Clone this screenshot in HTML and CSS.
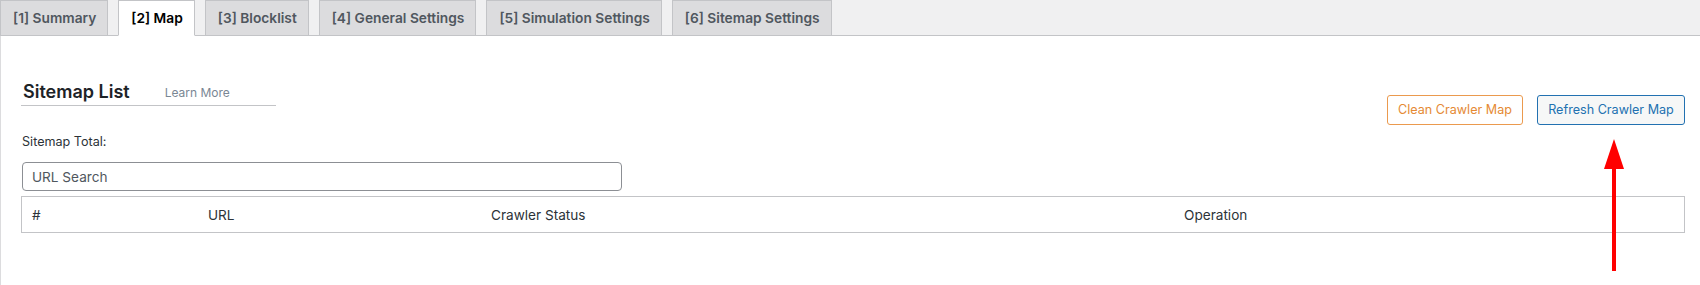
FILE: index.html
```html
<!DOCTYPE html>
<html lang="en">
<head>
<meta charset="utf-8">
<title>Sitemap List</title>
<link rel="stylesheet" href="styles.css">
</head>
<body>
<nav class="tabs">
  <a class="tab">[1] Summary</a>
  <a class="tab active">[2] Map</a>
  <a class="tab">[3] Blocklist</a>
  <a class="tab">[4] General Settings</a>
  <a class="tab">[5] Simulation Settings</a>
  <a class="tab">[6] Sitemap Settings</a>
</nav>
<main class="panel">
  <div class="top">
    <div class="heading">
      <h2 class="title">Sitemap List</h2>
      <a class="learn">Learn More</a>
    </div>
    <div class="actions">
      <button class="btn btn-clean">Clean Crawler Map</button>
      <button class="btn btn-refresh">Refresh Crawler Map</button>
    </div>
  </div>
  <div class="total">Sitemap Total:</div>
  <input class="search" type="text" placeholder="URL Search">
  <div class="table">
    <div class="cell c1">#</div>
    <div class="cell c2">URL</div>
    <div class="cell c3">Crawler Status</div>
    <div class="cell c4">Operation</div>
  </div>
  <svg class="arrow" width="24" height="134" viewBox="0 0 24 134" aria-hidden="true">
    <polygon points="12,0 2,30 22,30" fill="#ff0000"/>
    <rect x="10" y="28" width="4" height="104" fill="#ff0000"/>
  </svg>
</main>
</body>
</html>
```

FILE: styles.css
```css
* { box-sizing: border-box; }
html, body { margin: 0; padding: 0; }
body {
  width: 1700px;
  height: 285px;
  overflow: hidden;
  background: #fff;
  font-family: Inter, "Noto Sans", "Liberation Sans", sans-serif;
  color: #1d2327;
}

.tabs {
  display: flex;
  gap: 10px;
  height: 36px;
  background: #f0f0f1;
  border-bottom: 1px solid #c3c4c7;
}
.tab {
  display: flex;
  align-items: center;
  height: 36px;
  padding: 0 11px 0 12px;
  background: #dcdcde;
  border: 1px solid #c3c4c7;
  font-size: 13.75px;
  font-weight: 600;
  color: #50575e;
  margin-bottom: -1px;
  white-space: nowrap;
}
.tab.active {
  background: #fff;
  color: #000;
  border-bottom-color: #fff;
}

.panel {
  position: relative;
  height: 249px;
  border-left: 1px solid #dcdcde;
  padding: 0 15px 0 20px;
}

.top {
  display: flex;
  justify-content: space-between;
  align-items: flex-start;
  padding-top: 42px;
}
.heading {
  display: flex;
  align-items: center;
  width: 255px;
  height: 28px;
  border-bottom: 1px solid #c3c4c7;
  padding-left: 2px;
}
.title {
  margin: 0;
  font-size: 18px;
  font-weight: 600;
  color: #1d2327;
  line-height: 26px;
}
.learn {
  margin-left: 35px;
  font-size: 12px;
  color: #7a8794;
  margin-top: 2px;
}

.actions {
  display: flex;
  gap: 14px;
  margin-top: 17px;
}
.btn {
  height: 30px;
  padding: 0;
  border-radius: 3px;
  font-family: inherit;
  font-size: 12.6px;
  line-height: 28px;
  white-space: nowrap;
  text-align: center;
  background: #fff;
  cursor: pointer;
}
.btn-clean {
  width: 136px;
  border: 1px solid #eb9a4e;
  color: #e58a34;
}
.btn-refresh {
  width: 148px;
  border: 1px solid #2271b1;
  color: #2271b1;
  background: #f6f7f7;
}

.total {
  margin-top: 8px;
  font-size: 12.6px;
  line-height: 18px;
  color: #2c3338;
  padding-left: 1px;
}
.search {
  display: block;
  margin-top: 11px;
  width: 600px;
  height: 29px;
  border: 1px solid #8c8f94;
  border-radius: 4px;
  padding: 0 9px;
  font-family: inherit;
  font-size: 13.6px;
  color: #2c3338;
  margin-left: 1px;
}
.search::placeholder { color: #50575e; }

.table {
  display: grid;
  grid-template-columns: 176px 283px 693px 1fr;
  margin-top: 5px;
  height: 37px;
  border: 1px solid #c3c4c7;
}
.cell {
  display: flex;
  align-items: center;
  padding-left: 10px;
  font-size: 13.6px;
  color: #2c3338;
}

.arrow {
  position: absolute;
  left: 1601px;
  top: 103px;
}
```
